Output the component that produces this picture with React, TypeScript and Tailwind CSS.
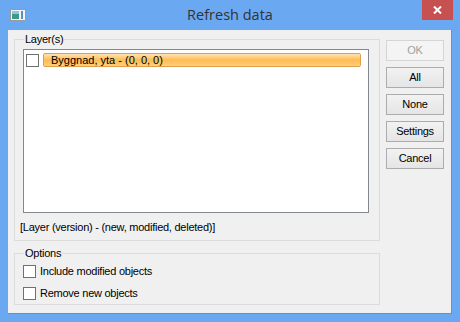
const ui = { fontFamily: '"Liberation Sans", Tahoma, sans-serif' }

function Check() {
  return <span className="inline-block h-[13px] w-[13px] shrink-0 border border-[#707070] bg-white" />
}

function Btn({ label, disabled }: { label: string; disabled?: boolean }) {
  return (
    <div
      className={
        "flex h-[21px] w-[58px] items-center justify-center border text-[11px] tracking-[-0.25px] " +
        (disabled
          ? "border-[#d5d5d5] bg-[#f4f4f4] text-[#a0a0a0]"
          : "border-[#acacac] bg-gradient-to-b from-[#f2f2f2] to-[#e5e5e5] text-black")
      }
    >
      {label}
    </div>
  )
}

export default function App() {
  return (
    <div className="flex h-[322px] w-[460px] flex-col bg-[#6aa9f2]" style={ui}>
      <div className="relative flex h-[30px] items-center justify-center">
        <svg className="absolute left-[10px] top-[9px]" width="16" height="12" viewBox="0 0 16 12">
          <rect x="0.5" y="0.5" width="15" height="11" fill="#f4f4f4" stroke="#9a9a9a" />
          <rect x="2" y="2" width="7" height="8" fill="#3d9a8a" />
          <rect x="2" y="2" width="7" height="3" fill="#8fc7d8" />
          <rect x="11" y="2" width="2" height="8" fill="#5a8fc8" />
        </svg>
        <span className="text-[14.5px] text-[#333]" style={{ fontFamily: '"Open Sans", "Noto Sans", sans-serif' }}>
          Refresh data
        </span>
        <div className="absolute right-[7px] top-0 flex h-[20px] w-[31px] items-center justify-center bg-[#c75050]">
          <svg width="9" height="8" viewBox="0 0 9 8">
            <path d="M1 0.5 L8 7.5 M8 0.5 L1 7.5" stroke="white" strokeWidth="2" />
          </svg>
        </div>
      </div>

      <div className="mx-[8px] mb-[8px] flex flex-1 border-b border-r border-[#5a94d8] bg-[#f0f0f0] px-[6px] pt-[3px] text-[11px] tracking-[-0.25px]">
        <div className="flex w-[366px] flex-col">
          <fieldset className="h-[208px] border border-[#dcdcdc] px-[8px]">
            <legend className="ml-[1px] px-[1px] leading-[13px] text-black">Layer(s)</legend>
            <div className="mt-[3px] h-[164px] w-[346px] border border-[#828790] bg-white">
              <div className="flex items-center gap-[4px] pl-[2px] pt-[3px]">
                <Check />
                <div className="flex h-[14px] flex-1 items-center rounded-[2px] border border-[#e0a04a] bg-gradient-to-b from-[#ffe3ae] via-[#ffbc52] to-[#ffcf7e] pl-[7px] tracking-normal text-black">
                  Byggnad, yta - (0, 0, 0)
                </div>
                <div className="w-[3px]" />
              </div>
            </div>
            <div className="ml-[-3px] mt-[6px] text-black">[Layer (version) - (new, modified, deleted)]</div>
          </fieldset>

          <fieldset className="mt-[6px] h-[58px] border border-[#dcdcdc] px-[8px]">
            <legend className="ml-[1px] px-[1px] leading-[13px] text-black">Options</legend>
            <div className="mt-[5px] flex flex-col gap-[9px] leading-[13px] text-black">
              <label className="flex items-center gap-[4px]">
                <Check />
                Include modified objects
              </label>
              <label className="flex items-center gap-[4px]">
                <Check />
                Remove new objects
              </label>
            </div>
          </fieldset>
        </div>

        <div className="ml-[6px] flex flex-col gap-[6px] pt-[7px]">
          <Btn label="OK" disabled />
          <Btn label="All" />
          <Btn label="None" />
          <Btn label="Settings" />
          <Btn label="Cancel" />
        </div>
      </div>
    </div>
  )
}
